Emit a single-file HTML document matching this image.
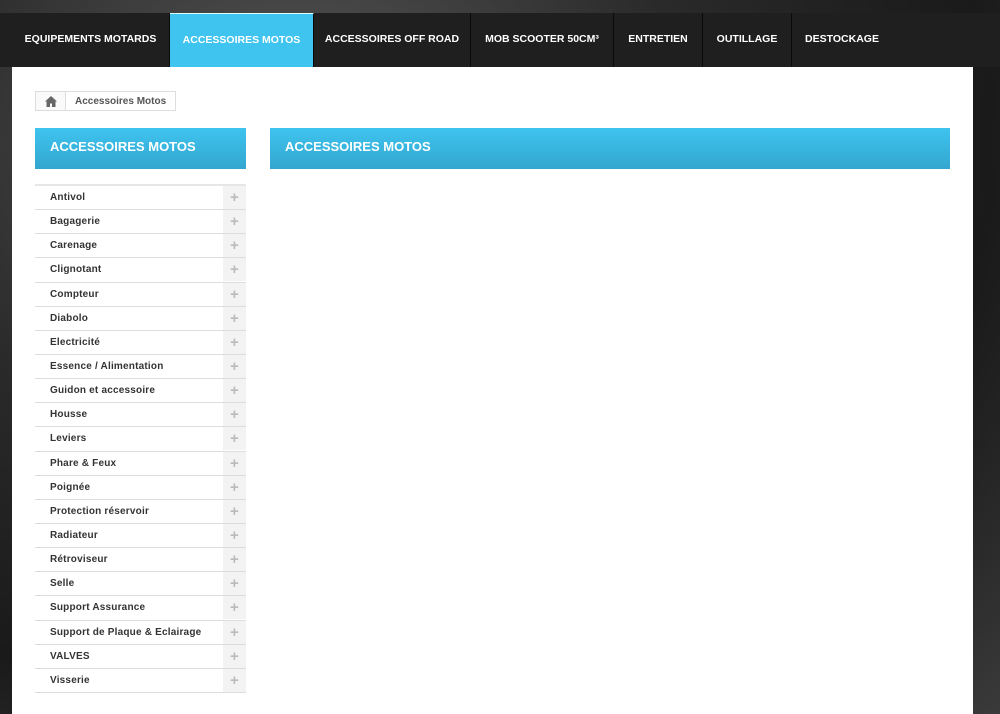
<!DOCTYPE html>
<html><head><meta charset="utf-8"><style>
*{margin:0;padding:0;box-sizing:border-box}
html,body{width:1000px;height:714px;overflow:hidden}
body{font-family:"Liberation Sans",Arial,sans-serif;background:radial-gradient(ellipse at 30% 20%,#5a5a5a,#2a2a2a 40%,#1a1a1a 70%,#3a3a3a);position:relative}
.nav{position:absolute;left:0;top:13px;width:1000px;height:54px;background:#1f1f1f}
.nav a{position:absolute;top:0;height:54px;line-height:52px;color:#fff;font-weight:bold;font-size:10.5px;text-align:center;border-right:1px solid #0a0a0a}
.nav a.act{background:#3ec4ef;border-top:1px solid #dff}
.panel{position:absolute;left:12px;top:67px;width:961px;height:647px;background:#fff}
.bc{position:absolute;left:35px;top:91px;height:20px;border:1px solid #ddd;font-size:10px;color:#555;font-weight:bold;display:flex}
.bc span{display:block;line-height:19px}
.bc .h{width:30px;border-right:1px solid #ddd;background:#fafafa;text-align:center}
.hd{position:absolute;top:128px;height:41px;background:linear-gradient(#3ec4ef,#33a6cf);color:#fff;font-weight:bold;font-size:13px;line-height:37px;padding-left:15px}
ul{position:absolute;left:35px;top:184px;width:211px;list-style:none;border-top:2px solid #e6e6e6}
li{height:24.15px;border-bottom:1px solid #ddd;position:relative;font-size:10px;font-weight:bold;color:#333;line-height:24px;padding-left:15px;letter-spacing:.2px}
li:after{content:"+";position:absolute;right:0;top:0;width:23px;height:23px;background:#f3f3f3;color:#bbb;text-align:center;font-size:15px;line-height:23px}
</style></head><body>
<div class="nav">
<a style="left:0;width:170px;padding-left:12px">EQUIPEMENTS MOTARDS</a>
<a class="act" style="left:170px;width:144px">ACCESSOIRES MOTOS</a>
<a style="left:314px;width:157px">ACCESSOIRES OFF ROAD</a>
<a style="left:471px;width:143px">MOB SCOOTER 50CM³</a>
<a style="left:614px;width:89px">ENTRETIEN</a>
<a style="left:703px;width:89px">OUTILLAGE</a>
<a style="left:792px;width:100px;border:none">DESTOCKAGE</a>
</div>
<div class="panel"></div>
<div class="bc"><span class="h"><svg width="12" height="11" viewBox="0 0 12 11" style="margin-top:4px"><path d="M6 0L0 5.5h1.5V11h3.5V7.5h2V11h3.5V5.5H12z" fill="#666"/></svg></span><span style="padding:0 9px">Accessoires Motos</span></div>
<div class="hd" style="left:35px;width:211px">ACCESSOIRES MOTOS</div>
<div class="hd" style="left:270px;width:680px">ACCESSOIRES MOTOS</div>
<ul>
<li>Antivol</li><li>Bagagerie</li><li>Carenage</li><li>Clignotant</li><li>Compteur</li><li>Diabolo</li><li>Electricité</li><li>Essence / Alimentation</li><li>Guidon et accessoire</li><li>Housse</li><li>Leviers</li><li>Phare &amp; Feux</li><li>Poignée</li><li>Protection réservoir</li><li>Radiateur</li><li>Rétroviseur</li><li>Selle</li><li>Support Assurance</li><li>Support de Plaque &amp; Eclairage</li><li>VALVES</li><li>Visserie</li>
</ul>
</body></html>
